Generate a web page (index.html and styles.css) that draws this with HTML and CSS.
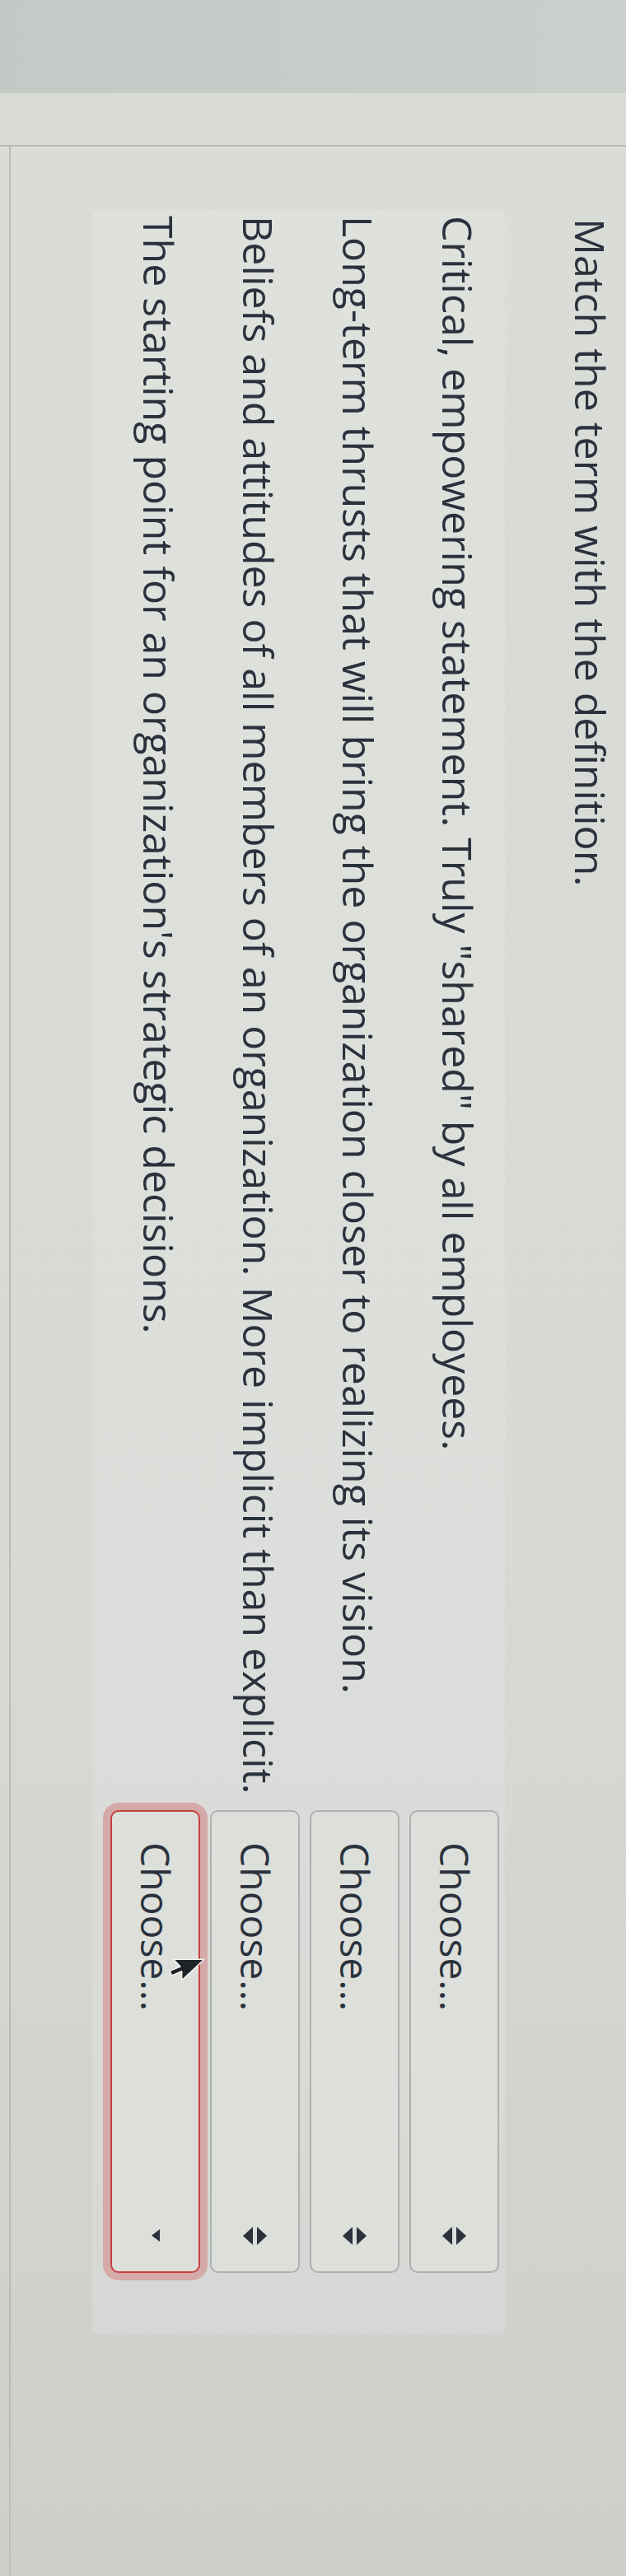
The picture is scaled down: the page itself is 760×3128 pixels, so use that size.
FILE: index.html
```html
<!DOCTYPE html>
<html lang="en">
<head>
<meta charset="utf-8">
<title>Match the term with the definition</title>
<link rel="stylesheet" href="styles.css">
</head>
<body>
<div class="stage">
  <div class="bezel"></div>
  <div class="strip"></div>
  <main class="question">
    <div class="qbody">
      <p class="prompt">Match the term with the definition.</p>
      <div class="answers">
        <div class="row">
          <span class="def">Critical, empowering statement. Truly "shared" by all employees.</span>
          <div class="select">
            <span class="choose">Choose...</span>
            <svg class="arrows" viewBox="0 0 29 22" width="29" height="22"><path d="M12 0 L12 22 L0 11 Z"/><path d="M17 0 L29 11 L17 22 Z"/></svg>
          </div>
        </div>
        <div class="row">
          <span class="def">Long-term thrusts that will bring the organization closer to realizing its vision.</span>
          <div class="select">
            <span class="choose">Choose...</span>
            <svg class="arrows" viewBox="0 0 29 22" width="29" height="22"><path d="M12 0 L12 22 L0 11 Z"/><path d="M17 0 L29 11 L17 22 Z"/></svg>
          </div>
        </div>
        <div class="row">
          <span class="def">Beliefs and attitudes of all members of an organization. More implicit than explicit.</span>
          <div class="select">
            <span class="choose">Choose...</span>
            <svg class="arrows" viewBox="0 0 29 22" width="29" height="22"><path d="M12 0 L12 22 L0 11 Z"/><path d="M17 0 L29 11 L17 22 Z"/></svg>
          </div>
        </div>
        <div class="row">
          <span class="def">The starting point for an organization's strategic decisions.</span>
          <div class="select select-focus">
            <span class="choose">Choose...</span>
            <svg class="arrow-down" viewBox="0 0 10 15" width="10" height="15"><path d="M10 0 L10 15 L0 7.5 Z"/></svg>
          </div>
        </div>
      </div>
    </div>
  </main>
  <svg class="cursor" viewBox="0 0 38 24" width="44" height="28"><path d="M37 1 L5 1 L12 8.5 L1 13 L3 18 L13.5 13.5 L13.5 23 Z"/></svg>
</div>
</body>
</html>
```

FILE: styles.css
```css
html, body {
  margin: 0;
  padding: 0;
  width: 760px;
  height: 3128px;
  overflow: hidden;
  background: #d6d8d4;
}

.stage {
  writing-mode: vertical-rl;
  text-orientation: sideways;
  inline-size: 3128px;
  block-size: 760px;
  display: flex;
  position: relative;
  font-family: "Open Sans", "Noto Sans", "DejaVu Sans", sans-serif;
  color: #2b323d;
}

.bezel {
  inline-size: 113px;
  flex: none;
  background: linear-gradient(to left, #c9d0cc 0%, #c3cac6 100%);
}

.strip {
  inline-size: 63px;
  flex: none;
  background: #d9dbd7;
  border-inline-end: 2px solid #b6b9b6;
}

.question {
  flex: 1;
  display: flex;
  flex-direction: column;
  background: linear-gradient(to bottom, #dadcd8 0%, #d7d9d5 60%, #cdcfcb 100%);
}

.qbody {
  block-size: 749px;
  box-sizing: border-box;
  padding-block-start: 10px;
  border-block-end: 2px solid #b9bcb9;
}

.prompt {
  margin-block: 0;
  margin-inline-start: 87px;
  font-size: 50px;
  line-height: 66px;
  white-space: nowrap;
}

.answers {
  margin-block-start: 71px;
  margin-inline-start: 77px;
  inline-size: 2580px;
  box-sizing: border-box;
  padding-block-start: 7px;
  padding-block-end: 22px;
  padding-inline-start: 7px;
  padding-inline-end: 75px;
  background: rgba(255, 255, 255, 0.14);
  border-radius: 8px;
  display: flex;
  flex-direction: column;
  gap: 12px;
}

.row {
  block-size: 109px;
  display: flex;
  align-items: center;
}

.def {
  flex: 1;
  font-size: 50px;
  line-height: 66px;
  padding-block-end: 8px;
  white-space: nowrap;
}

.select {
  inline-size: 562px;
  block-size: 109px;
  box-sizing: border-box;
  flex: none;
  display: flex;
  align-items: center;
  justify-content: space-between;
  padding-inline-start: 37px;
  padding-inline-end: 32px;
  border: 2px solid #adb1b0;
  border-radius: 10px;
  background: #dddfdb;
}

.select-focus {
  border-color: #c6403f;
  box-shadow: 0 0 0 9px #d5a9a8;
}

.choose {
  font-size: 48px;
  line-height: 66px;
}

.arrows,
.arrow-down {
  flex: none;
}

.arrows path,
.arrow-down path {
  fill: #2b323d;
}

.arrow-down {
  margin-inline-end: 4px;
}

.cursor {
  position: absolute;
  left: 205px;
  top: 2378px;
}

.cursor path {
  fill: #1e2126;
  stroke: #f4f4f2;
  stroke-width: 1.4;
  stroke-linejoin: round;
}
```
